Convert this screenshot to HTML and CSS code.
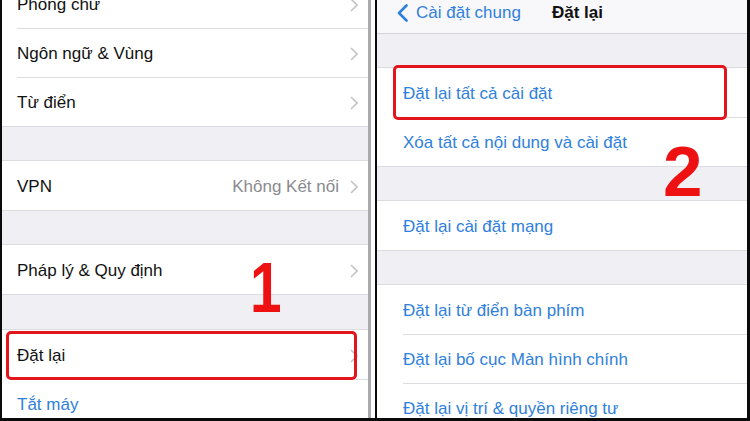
FILE: index.html
```html
<!DOCTYPE html>
<html lang="vi">
<head>
<meta charset="utf-8">
<link rel="stylesheet" href="styles.css">
</head>
<body>
<div class="frame">
  <div class="panel left">
    <div class="group first">
      <div class="row"><span class="label">Phông chữ</span><svg class="chev" viewBox="0 0 8 14"><polyline points="1,1 7,7 1,13"/></svg></div>
      <div class="row"><span class="label">Ngôn ngữ &amp; Vùng</span><svg class="chev" viewBox="0 0 8 14"><polyline points="1,1 7,7 1,13"/></svg></div>
      <div class="row"><span class="label">Từ điển</span><svg class="chev" viewBox="0 0 8 14"><polyline points="1,1 7,7 1,13"/></svg></div>
    </div>
    <div class="gap"></div>
    <div class="group">
      <div class="row"><span class="label">VPN</span><span class="value">Không Kết nối</span><svg class="chev" viewBox="0 0 8 14"><polyline points="1,1 7,7 1,13"/></svg></div>
    </div>
    <div class="gap"></div>
    <div class="group">
      <div class="row"><span class="label">Pháp lý &amp; Quy định</span><svg class="chev" viewBox="0 0 8 14"><polyline points="1,1 7,7 1,13"/></svg></div>
    </div>
    <div class="gap gap34"></div>
    <div class="group">
      <div class="row"><span class="label">Đặt lại</span><svg class="chev" viewBox="0 0 8 14"><polyline points="1,1 7,7 1,13"/></svg></div>
      <div class="row"><span class="label blue">Tắt máy</span></div>
    </div>
    <div class="hl hl1"></div>
    <div class="num num1">1</div>
  </div>
  <div class="divider"></div>
  <div class="panel right">
    <div class="nav">
      <svg class="back" viewBox="0 0 11 18"><polyline points="9.5,1.5 2,9 9.5,16.5"/></svg>
      <span class="back-text">Cài đặt chung</span>
      <span class="title">Đặt lại</span>
    </div>
    <div class="gap"></div>
    <div class="group">
      <div class="row"><span class="label blue">Đặt lại tất cả cài đặt</span></div>
      <div class="row"><span class="label blue">Xóa tất cả nội dung và cài đặt</span></div>
    </div>
    <div class="gap"></div>
    <div class="group">
      <div class="row"><span class="label blue">Đặt lại cài đặt mạng</span></div>
    </div>
    <div class="gap"></div>
    <div class="group">
      <div class="row"><span class="label blue">Đặt lại từ điển bàn phím</span></div>
      <div class="row"><span class="label blue">Đặt lại bố cục Màn hình chính</span></div>
      <div class="row"><span class="label blue">Đặt lại vị trí &amp; quyền riêng tư</span></div>
    </div>
    <div class="hl hl2"></div>
    <div class="num num2">2</div>
  </div>
</div>
</body>
</html>
```
FILE: styles.css
```css
html, body {
  margin: 0;
  padding: 0;
  background: #000;
}
body {
  width: 750px;
  height: 421px;
  overflow: hidden;
  font-family: "Liberation Sans", Arial, sans-serif;
}
.frame {
  display: flex;
  width: 750px;
  height: 421px;
  box-sizing: border-box;
  border-left: 2px solid #0a0a0a;
  border-right: 3px solid #0a0a0a;
  border-bottom: 3px solid #0a0a0a;
  background: #fff;
  overflow: hidden;
}
.panel {
  position: relative;
  overflow: hidden;
  background: #f0eff4;
}
.left {
  width: 366px;
}
.divider {
  width: 9px;
  box-sizing: border-box;
  border-left: 3px solid #a9a9ab;
  border-right: 2px solid #0a0a0a;
  background: #fff;
}
.right {
  flex: 1;
}
.group {
  background: #fff;
  border-top: 1px solid #dcdce0;
  border-bottom: 1px solid #dcdce0;
}
.group.first {
  margin-top: -21px;
  border-top: none;
}
.gap {
  height: 33px;
}
.gap34 {
  height: 34px;
}
.row {
  height: 49px;
  box-sizing: border-box;
  display: flex;
  align-items: center;
  padding-left: 15px;
  padding-right: 10px;
  padding-top: 2px;
  position: relative;
  font-size: 17px;
  color: #111;
}
.row + .row::before {
  content: "";
  position: absolute;
  top: 0;
  left: 15px;
  right: 0;
  height: 1px;
  background: #dcdce0;
}
.label {
  flex: 1;
  white-space: nowrap;
}
.value {
  color: #8a8a8f;
  margin-right: 11px;
}
.blue {
  color: #2f80dc;
}
.chev {
  width: 8px;
  height: 14px;
  fill: none;
  stroke: #c4c4c8;
  stroke-width: 1.6;
}
.right .row {
  padding-left: 26px;
}
.right .row + .row::before {
  left: 26px;
}
.nav {
  height: 34px;
  box-sizing: border-box;
  background: #f8f8fa;
  border-bottom: 1px solid #d4d4d8;
  display: flex;
  align-items: flex-start;
  padding-left: 20px;
  padding-top: 3px;
  font-size: 17px;
}
.back {
  width: 11px;
  height: 18px;
  fill: none;
  stroke: #2f80dc;
  stroke-width: 2.6;
  stroke-linecap: round;
  stroke-linejoin: round;
  margin-top: 1px;
}
.back-text {
  color: #2f80dc;
  margin-left: 8px;
}
.title {
  font-weight: bold;
  color: #111;
  margin-left: 31px;
}
.hl {
  position: absolute;
  box-sizing: border-box;
  border: 3px solid #e2151c;
  border-radius: 5px;
}
.hl1 {
  left: 4px;
  top: 331px;
  width: 351px;
  height: 49px;
}
.hl2 {
  left: 16px;
  top: 65px;
  width: 334px;
  height: 55px;
}
.num {
  position: absolute;
  font-family: "Liberation Sans", Arial, sans-serif;
  font-weight: bold;
  color: #ee1111;
  line-height: 1;
}
.num1 {
  left: 244px;
  top: 252px;
  font-size: 71px;
  transform: scaleX(0.8);
}
.num2 {
  left: 286px;
  top: 136px;
  font-size: 71px;
}
```
